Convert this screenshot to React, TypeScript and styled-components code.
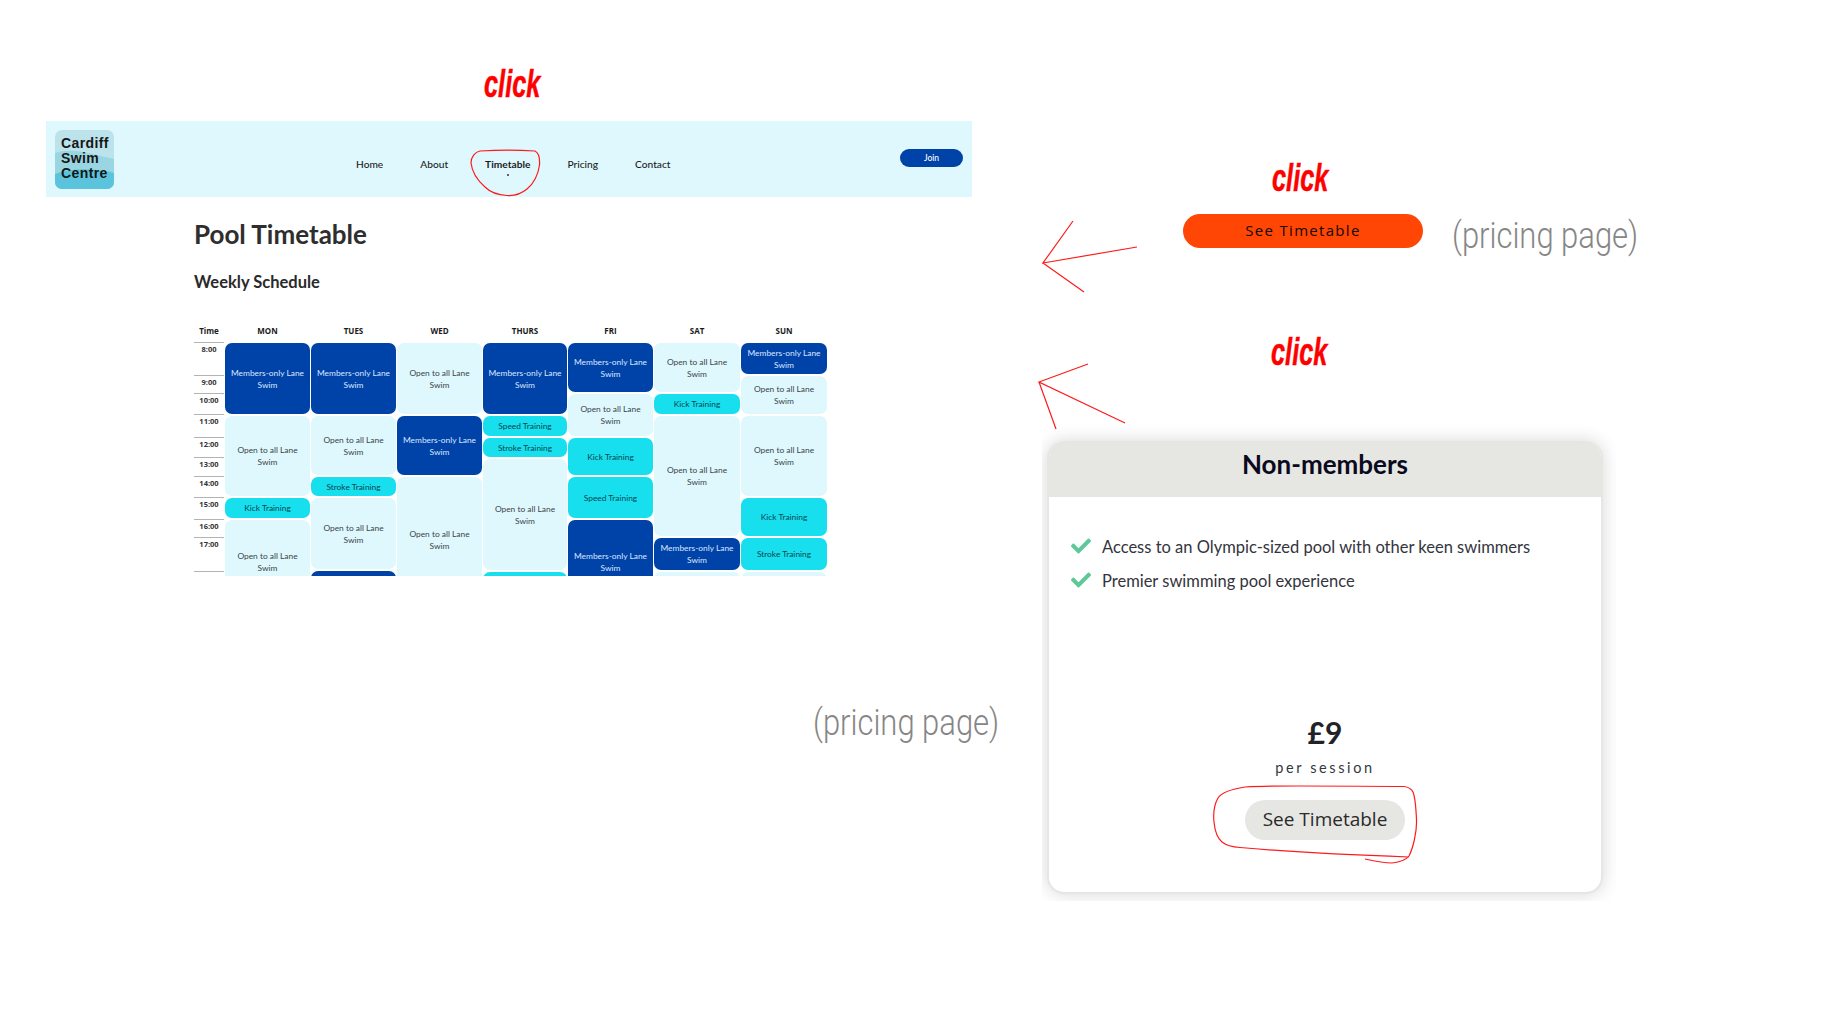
import React from "react";
import styled, { createGlobalStyle } from "styled-components";
import { FaCheck } from "react-icons/fa";

const GlobalStyle = createGlobalStyle`
  html, body {
    margin: 0;
    padding: 0;
    background: #ffffff;
  }
`;

const colors = {
  blue: "#0043a8",
  light: "#dff8fe",
  cyan: "#18dfee",
  stone: "#e6e6e2",
  red: "#ff0000",
};

// the whole picture is a storyboard: pieces sit on a free canvas
const Canvas = styled.div`
  position: relative;
  width: 1826px;
  height: 1030px;
  overflow: hidden;
  background: #ffffff;
`;

const Click = styled.div<{ $x: number; $y: number }>`
  position: absolute;
  left: ${(p) => p.$x}px;
  top: ${(p) => p.$y}px;
  font: italic 700 39px/40px "Liberation Sans", sans-serif;
  color: ${colors.red};
  -webkit-text-stroke: 0.5px ${colors.red};
  transform: scaleX(0.65);
  transform-origin: left center;
`;

const PageNote = styled.div<{ $x: number; $y: number }>`
  position: absolute;
  left: ${(p) => p.$x}px;
  top: ${(p) => p.$y}px;
  font: 300 36px/44px Roboto, sans-serif;
  color: #868686;
  white-space: nowrap;
  transform: scaleX(0.86);
  transform-origin: left center;
`;

const Marks = styled.svg`
  position: absolute;
  left: 0;
  top: 0;
  pointer-events: none;
  z-index: 5;
`;

/* timetable page */
const PageShot = styled.div`
  position: absolute;
  left: 46px;
  top: 121px;
  width: 926px;
`;

const Nav = styled.nav`
  height: 76px;
  background: ${colors.light};
  display: flex;
  align-items: center;
  padding: 0 9px 0 9px;
`;

const Logo = styled.div`
  position: relative;
  width: 59px;
  height: 59px;
  border-radius: 7px;
  overflow: hidden;
  flex-shrink: 0;
  background: #bce3eb;
`;

const LogoWaves = styled.svg`
  position: absolute;
  left: 0;
  top: 0;
`;

const LogoText = styled.div`
  position: relative;
  padding: 6px 0 0 6px;
  font: 700 14px/15px "Liberation Sans", sans-serif;
  letter-spacing: 0.4px;
  color: #161616;
`;

const NavLinks = styled.div`
  display: flex;
  gap: 37px;
  margin: 9px 0 0 242px;
`;

const NavLink = styled.a<{ $active?: boolean }>`
  position: relative;
  font: ${(p) => (p.$active ? 700 : 500)} 10.2px/14px Lato, sans-serif;
  color: #1c1c1c;
  &::after {
    content: "";
    display: ${(p) => (p.$active ? "block" : "none")};
    position: absolute;
    left: 50%;
    top: 17px;
    width: 2px;
    height: 2px;
    margin-left: -1px;
    border-radius: 50%;
    background: #333333;
  }
`;

const JoinButton = styled.button`
  margin: -2px 0 0 auto;
  width: 63px;
  height: 18px;
  padding: 0;
  border: 0;
  border-radius: 9px;
  background: ${colors.blue};
  color: #ffffff;
  font: 500 8.5px/18px Lato, sans-serif;
`;

const PageBody = styled.main`
  padding-left: 148px;
`;

const Title = styled.h1`
  margin: 22px 0 0;
  font: 700 26px/30px Lato, sans-serif;
  color: #2e2e2e;
`;

const Subtitle = styled.h2`
  margin: 23px 0 0;
  font: 700 16.5px/20px Lato, sans-serif;
  color: #2a2a2a;
`;

const Schedule = styled.div`
  margin-top: 33px;
  display: grid;
  grid-template-columns: 30px 85px 85px 85px 84px 85px 86px 86px;
  column-gap: 1px;
  width: 633px;
`;

const DayHead = styled.div`
  height: 17px;
  box-sizing: border-box;
  text-align: center;
  font: 700 8px/12px "Open Sans", sans-serif;
  color: #1a1a1a;
`;

const TimeColumn = styled.div`
  height: 234px;
  overflow: hidden;
`;

const TimeRow = styled.div<{ $h: number }>`
  height: ${(p) => p.$h}px;
  box-sizing: border-box;
  border-top: 1.5px solid #b3b3b3;
  text-align: center;
  font: 700 7.5px/12px "Open Sans", sans-serif;
  color: #333333;
`;

const DayColumn = styled.div`
  height: 234px;
  padding-top: 1px;
  box-sizing: border-box;
  overflow: hidden;
  display: flex;
  flex-direction: column;
  gap: 2px;
`;

const slotBg = { blue: colors.blue, light: colors.light, cyan: colors.cyan };
const slotInk = { blue: "#dbe6ff", light: "#3a4448", cyan: "#06454e" };

const Slot = styled.div<{ $kind: "blue" | "light" | "cyan"; $h: number }>`
  flex: 0 0 ${(p) => p.$h}px;
  box-sizing: border-box;
  padding: 0 2px;
  display: flex;
  align-items: center;
  justify-content: center;
  text-align: center;
  border-radius: 7px;
  background: ${(p) => slotBg[p.$kind]};
  color: ${(p) => slotInk[p.$kind]};
  font: 400 8.4px/12px Lato, sans-serif;
`;

/* orange button crop */
const OrangeButton = styled.button`
  position: absolute;
  left: 1183px;
  top: 214px;
  width: 240px;
  height: 34px;
  padding: 0 0 2px;
  border: 0;
  border-radius: 17px;
  background: #ff4605;
  color: #140800;
  font: 500 15px/30px "Open Sans", sans-serif;
  letter-spacing: 1.3px;
`;

/* pricing card crop, the shadow is cut off by the crop */
const CardCrop = styled.div`
  position: absolute;
  left: 1042px;
  top: 420px;
  width: 574px;
  height: 481px;
  overflow: hidden;
  padding: 21px 0 0 5px;
  box-sizing: border-box;
`;

const Card = styled.section`
  width: 556px;
  height: 453px;
  box-sizing: border-box;
  border-radius: 17px;
  border: 2px solid ${colors.stone};
  border-top: 0;
  background: #ffffff;
  box-shadow: 0 0 18px rgba(0, 0, 0, 0.16);
  display: flex;
  flex-direction: column;
  overflow: hidden;
`;

const CardHead = styled.h3`
  margin: 0;
  height: 56px;
  flex-shrink: 0;
  background: ${colors.stone};
  text-align: center;
  font: 700 26px/47px Lato, sans-serif;
  color: #0a0a1e;
`;

const Perks = styled.ul`
  list-style: none;
  margin: 38px 0 0;
  padding: 0 0 0 22px;
  display: flex;
  flex-direction: column;
  gap: 10px;
`;

const Perk = styled.li`
  display: flex;
  align-items: center;
  gap: 11px;
  height: 24px;
  font: 400 16.5px/24px Lato, sans-serif;
  color: #34343c;
  svg {
    flex-shrink: 0;
    color: #5ec898;
    margin-top: -3px;
  }
`;

const PriceBlock = styled.div`
  margin-top: auto;
  padding-bottom: 52px;
  display: flex;
  flex-direction: column;
  align-items: center;
`;

const Price = styled.div`
  font: 700 30px/36px Lato, sans-serif;
  color: #1f2328;
`;

const PriceUnit = styled.div`
  margin-top: 8px;
  font: 400 14.5px/20px Lato, sans-serif;
  letter-spacing: 2.6px;
  color: #33383e;
`;

const GreyButton = styled.button`
  margin-top: 22px;
  width: 160px;
  height: 40px;
  padding: 0 0 2px;
  border: 0;
  border-radius: 20px;
  background: ${colors.stone};
  color: #2a2a2a;
  font: 400 19px/38px "Open Sans", sans-serif;
`;

type Kind = "blue" | "light" | "cyan";
type Block = [Kind, string, number];

const MEMBERS = "Members-only Lane Swim";
const OPEN = "Open to all Lane Swim";

const days: { name: string; blocks: Block[] }[] = [
  {
    name: "MON",
    blocks: [
      ["blue", MEMBERS, 71],
      ["light", OPEN, 80],
      ["cyan", "Kick Training", 20],
      ["light", OPEN, 83],
    ],
  },
  {
    name: "TUES",
    blocks: [
      ["blue", MEMBERS, 71],
      ["light", OPEN, 59],
      ["cyan", "Stroke Training", 19],
      ["light", OPEN, 71],
      ["blue", "", 40],
    ],
  },
  {
    name: "WED",
    blocks: [
      ["light", OPEN, 71],
      ["blue", MEMBERS, 59],
      ["light", OPEN, 125],
    ],
  },
  {
    name: "THURS",
    blocks: [
      ["blue", MEMBERS, 71],
      ["cyan", "Speed Training", 20],
      ["cyan", "Stroke Training", 19],
      ["light", OPEN, 111],
      ["cyan", "", 30],
    ],
  },
  {
    name: "FRI",
    blocks: [
      ["blue", MEMBERS, 49],
      ["light", OPEN, 42],
      ["cyan", "Kick Training", 37],
      ["cyan", "Speed Training", 41],
      ["blue", MEMBERS, 83],
    ],
  },
  {
    name: "SAT",
    blocks: [
      ["light", OPEN, 49],
      ["cyan", "Kick Training", 20],
      ["light", OPEN, 120],
      ["blue", MEMBERS, 32],
      ["light", "", 30],
    ],
  },
  {
    name: "SUN",
    blocks: [
      ["blue", MEMBERS, 31],
      ["light", OPEN, 38],
      ["light", OPEN, 80],
      ["cyan", "Kick Training", 38],
      ["cyan", "Stroke Training", 32],
      ["light", "", 30],
    ],
  },
];

const times: [string, number][] = [
  ["8:00", 33],
  ["9:00", 18],
  ["10:00", 21],
  ["11:00", 23],
  ["12:00", 20],
  ["13:00", 19],
  ["14:00", 21],
  ["15:00", 22],
  ["16:00", 18],
  ["17:00", 34],
  ["", 5],
];

const navItems = ["Home", "About", "Timetable", "Pricing", "Contact"];

export default function App() {
  return (
    <Canvas>
      <GlobalStyle />

      <Click $x={484} $y={64}>click</Click>
      <Click $x={1272} $y={158}>click</Click>
      <Click $x={1271} $y={332}>click</Click>

      <PageShot>
        <Nav>
          <Logo>
            <LogoWaves width="59" height="59" viewBox="0 0 59 59">
              <path d="M0 23 C14 18 30 22 59 29 V59 H0 Z" fill="#9ad6e2" />
              <path d="M0 44 C16 38 38 38 59 43 V59 H0 Z" fill="#5bc4dc" />
            </LogoWaves>
            <LogoText>
              Cardiff
              <br />
              Swim
              <br />
              Centre
            </LogoText>
          </Logo>
          <NavLinks>
            {navItems.map((item) => (
              <NavLink key={item} $active={item === "Timetable"}>
                {item}
              </NavLink>
            ))}
          </NavLinks>
          <JoinButton>Join</JoinButton>
        </Nav>
        <PageBody>
          <Title>Pool Timetable</Title>
          <Subtitle>Weekly Schedule</Subtitle>
          <Schedule>
            <DayHead>Time</DayHead>
            {days.map((d) => (
              <DayHead key={d.name}>{d.name}</DayHead>
            ))}
            <TimeColumn>
              {times.map(([label, h], i) => (
                <TimeRow key={i} $h={h}>
                  {label}
                </TimeRow>
              ))}
            </TimeColumn>
            {days.map((d) => (
              <DayColumn key={d.name}>
                {d.blocks.map(([kind, text, h], i) => (
                  <Slot key={i} $kind={kind} $h={h}>
                    {text}
                  </Slot>
                ))}
              </DayColumn>
            ))}
          </Schedule>
        </PageBody>
      </PageShot>

      <OrangeButton>See Timetable</OrangeButton>
      <PageNote $x={1452} $y={214}>(pricing page)</PageNote>
      <PageNote $x={813} $y={701}>(pricing page)</PageNote>

      <CardCrop>
        <Card>
          <CardHead>Non-members</CardHead>
          <Perks>
            <Perk>
              <FaCheck size={20} />
              Access to an Olympic-sized pool with other keen swimmers
            </Perk>
            <Perk>
              <FaCheck size={20} />
              Premier swimming pool experience
            </Perk>
          </Perks>
          <PriceBlock>
            <Price>£9</Price>
            <PriceUnit>per session</PriceUnit>
            <GreyButton>See Timetable</GreyButton>
          </PriceBlock>
        </Card>
      </CardCrop>

      <Marks width="1826" height="1030" viewBox="0 0 1826 1030" fill="none" stroke="#ff1a1a" strokeWidth="1.2">
        <path d="M1073 221 L1043 263 L1137 247 M1043 263 L1084 292" />
        <path d="M1088 364 L1039 382 L1125 423 M1039 382 L1056 429" />
        <path d="M480 151 C496 150 520 150 535 151 C539 153 540 158 539.5 165 C538 176 533 184 527 189 C521 194 514 196 507 195.5 C497 195 490 192 485 187 C477 180 472 172 471 163 C471 157 475 152 480 151 Z" />
        <path d="M1365 859 C1374 861 1384 863 1392 863 C1400 862 1406 860 1409 856 C1413 848 1417 832 1416.5 820 C1416 808 1415 797 1413 792 C1411 788 1408 787 1404 786.5 C1370 786 1330 786 1298 786 C1280 786 1262 786 1245 787 C1232 789 1222 792 1218 798 C1214 805 1213 812 1214 822 C1215 832 1217 838 1222 842 C1227 846 1232 847 1240 847.5 C1290 852 1350 855 1409 857" />
      </Marks>
    </Canvas>
  );
}
